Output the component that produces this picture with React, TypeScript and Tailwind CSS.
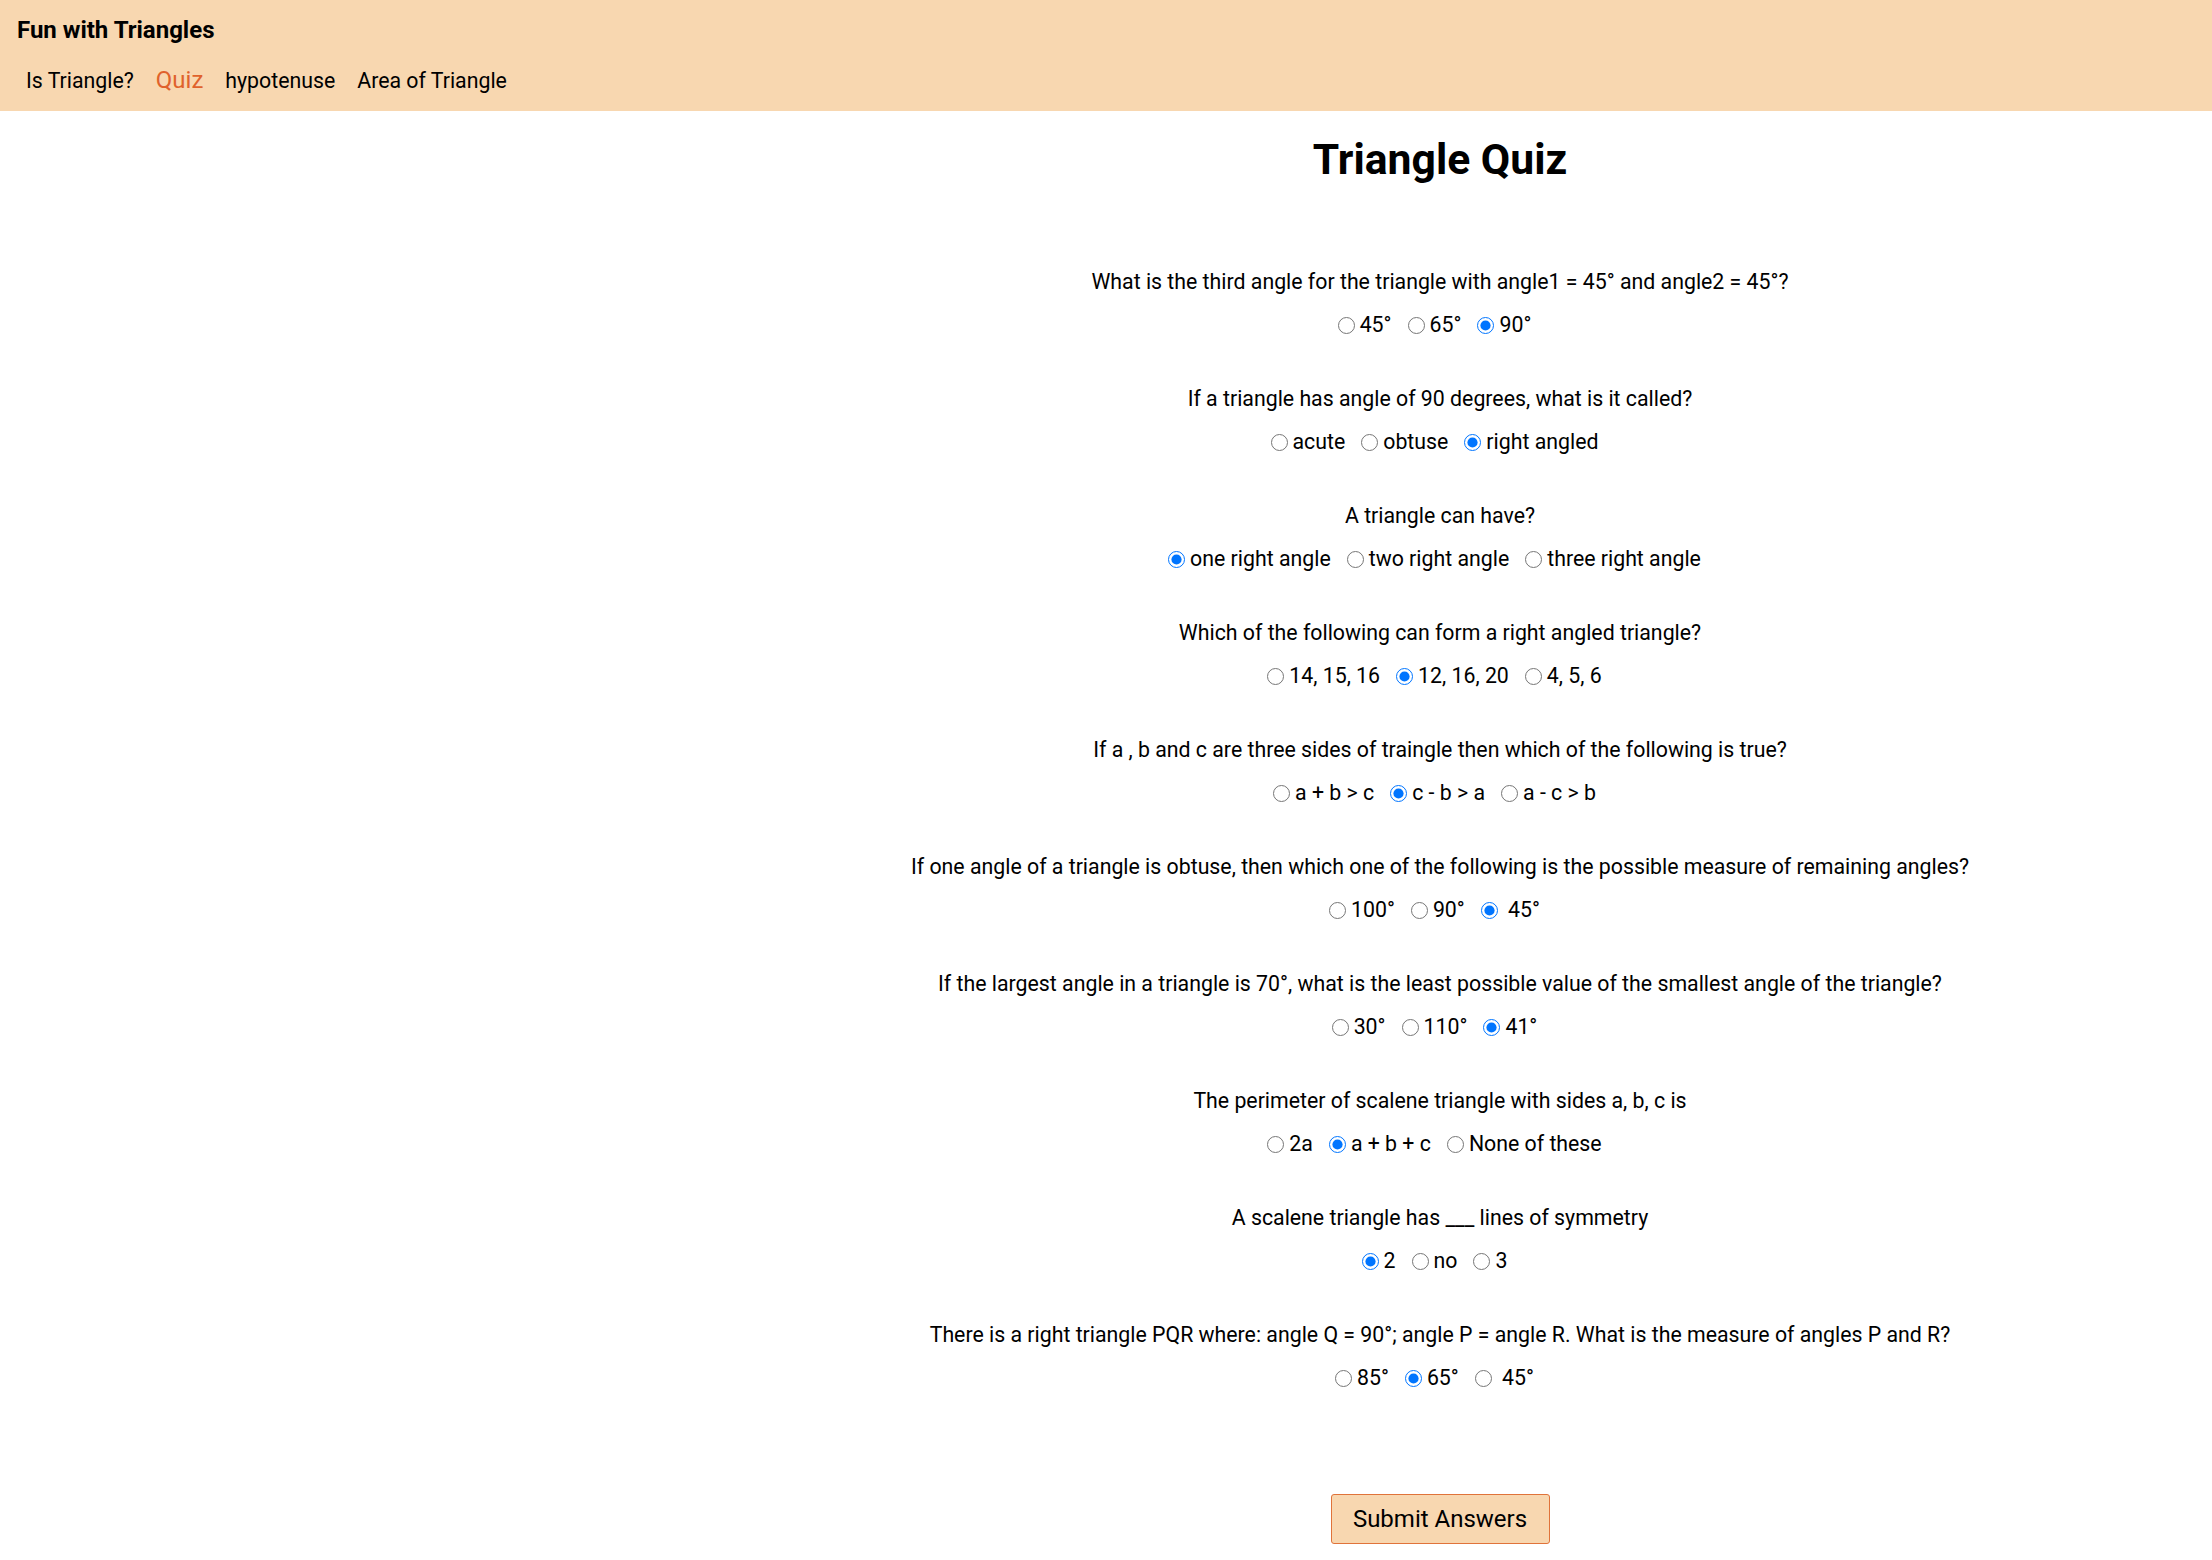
import React from "react";

type Question = {
  text: string;
  options: string[];
  picked: number;
};

const questions: Question[] = [
  {
    text: "What is the third angle for the triangle with angle1 = 45° and angle2 = 45°?",
    options: ["45°", "65°", "90°"],
    picked: 2,
  },
  {
    text: "If a triangle has angle of 90 degrees, what is it called?",
    options: ["acute", "obtuse", "right angled"],
    picked: 2,
  },
  {
    text: "A triangle can have?",
    options: ["one right angle", "two right angle", "three right angle"],
    picked: 0,
  },
  {
    text: "Which of the following can form a right angled triangle?",
    options: ["14, 15, 16", "12, 16, 20", "4, 5, 6"],
    picked: 1,
  },
  {
    text: "If a , b and c are three sides of traingle then which of the following is true?",
    options: ["a + b > c", "c - b > a", "a - c > b"],
    picked: 1,
  },
  {
    text: "If one angle of a triangle is obtuse, then which one of the following is the possible measure of remaining angles?",
    options: ["100°", "90°", "\u00a045°"],
    picked: 2,
  },
  {
    text: "If the largest angle in a triangle is 70°, what is the least possible value of the smallest angle of the triangle?",
    options: ["30°", "110°", "41°"],
    picked: 2,
  },
  {
    text: "The perimeter of scalene triangle with sides a, b, c is",
    options: ["2a", "a + b + c", "None of these"],
    picked: 1,
  },
  {
    text: "A scalene triangle has ___ lines of symmetry",
    options: ["2", "no", "3"],
    picked: 0,
  },
  {
    text: "There is a right triangle PQR where: angle Q = 90°; angle P = angle R. What is the measure of angles P and R?",
    options: ["85°", "65°", "\u00a045°"],
    picked: 1,
  },
];

const links = ["Is Triangle?", "Quiz", "hypotenuse", "Area of Triangle"];

function QuizQuestion({ q, index }: { q: Question; index: number }) {
  return (
    <div className="flex flex-col items-center">
      <p className="text-[21.3px] leading-[28px]">{q.text}</p>
      <div className="mt-[14px] flex h-[30px] items-center gap-[16px] pr-[11px] text-[21.3px] leading-[30px]">
        {q.options.map((opt, i) => (
          <label key={opt} className="flex items-center gap-[5px]">
            <input
              type="radio"
              name={`q${index}`}
              defaultChecked={i === q.picked}
              className="m-0 h-[17px] w-[17px]"
            />
            <span>{opt}</span>
          </label>
        ))}
      </div>
    </div>
  );
}

export default function App() {
  return (
    <div className="min-h-screen bg-white font-['Roboto',sans-serif] text-black">
      <header className="h-[111px] bg-[#f8d7b0] px-[17px] pt-[16px]">
        <h1 className="text-[24px] font-bold leading-[28px]">Fun with Triangles</h1>
        <nav className="mt-[22px] flex items-baseline gap-[22px] pl-[9px] text-[21.3px] leading-[28px]">
          {links.map((l) => (
            <a key={l} className={l === "Quiz" ? "text-[24px] text-[#e0622c]" : "text-black"}>
              {l}
            </a>
          ))}
        </nav>
      </header>
      <div className="flex">
        <div className="w-[668px] shrink-0" />
        <main className="flex flex-1 flex-col items-center">
          <h2 className="mt-[22px] text-[42.7px] font-bold leading-[52px]">Triangle Quiz</h2>
          <div className="mt-[83px] flex flex-col gap-[45px]">
            {questions.map((q, i) => (
              <QuizQuestion key={i} q={q} index={i} />
            ))}
          </div>
          <button className="mt-[101px] h-[50px] w-[219px] rounded-[3px] border border-[#e0733a] bg-[#f8d7b0] text-[24px]">
            Submit Answers
          </button>
        </main>
      </div>
    </div>
  );
}
